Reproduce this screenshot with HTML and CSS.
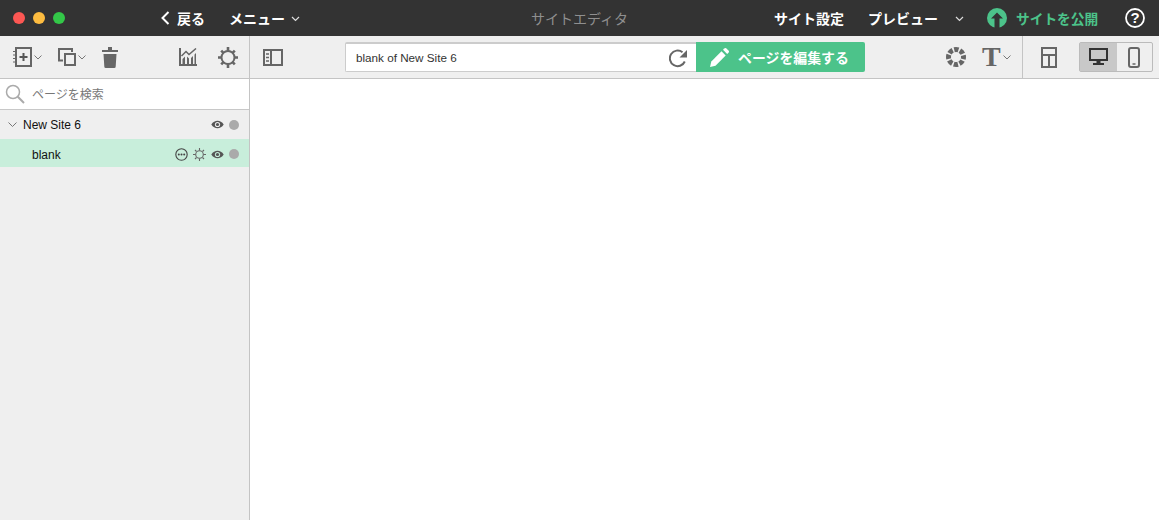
FILE: index.html
```html
<!DOCTYPE html>
<html lang="ja">
<head>
  <meta charset="UTF-8" />
  <title>サイトエディタ</title>
  <link rel="stylesheet" href="styles.css">
</head>
<body>
  <header class="titlebar">
    <div class="lights">
      <span class="light red"></span>
      <span class="light yellow"></span>
      <span class="light green"></span>
    </div>
    <div class="nav-left">
      <span class="nav-item back">
        <svg width="10" height="14" viewBox="0 0 10 14"><path d="M8.5 1 2.5 7l6 6" fill="none" stroke="#fff" stroke-width="2"/></svg>
        戻る
      </span>
      <span class="nav-item menu">メニュー
        <svg class="chev" width="9" height="6" viewBox="0 0 9 6"><path d="M1 1l3.5 3.5L8 1" fill="none" stroke="#ddd" stroke-width="1.2"/></svg>
      </span>
    </div>
    <div class="title">サイトエディタ</div>
    <div class="nav-right">
      <span class="nav-item">サイト設定</span>
      <span class="nav-item preview">プレビュー</span>
      <svg class="preview-chev" width="9" height="6" viewBox="0 0 9 6"><path d="M1 1l3.5 3.5L8 1" fill="none" stroke="#ddd" stroke-width="1.2"/></svg>
      <span class="publish">
        <svg width="20" height="20" viewBox="0 0 20 20"><circle cx="10" cy="10" r="10" fill="#4cc38a"/><path d="M10 4.5 16 10.5H12.5V20H7.5V10.5H4Z" fill="#333"/></svg>
        サイトを公開
      </span>
      <svg class="help" width="20" height="20" viewBox="0 0 20 20"><circle cx="10" cy="10" r="9" fill="none" stroke="#fff" stroke-width="1.8"/><text x="10" y="15" text-anchor="middle" class="help-mark">?</text></svg>
    </div>
  </header>

  <div class="toolbar">
    <div class="tools-side">
      <svg class="ic-add" width="19" height="20" viewBox="0 0 19 20" fill="none" stroke="#666" stroke-width="2">
        <rect x="3" y="1" width="15" height="18"/>
        <path d="M10.5 6v8M6.5 10h8" stroke="#555" stroke-width="2"/>
        <path d="M0 4.5h4M0 8h4M0 11.5h4M0 15h4" stroke-width="1.2"/>
      </svg>
      <svg class="chev-s" width="8" height="5" viewBox="0 0 8 5"><path d="M.5.5 4 4 7.5.5" fill="none" stroke="#777"/></svg>
      <svg class="ic-copy" width="18" height="18" viewBox="0 0 18 18" fill="none" stroke="#666" stroke-width="2">
        <path d="M5 12.5H1V1h13v3"/>
        <rect x="7" y="6" width="10" height="11"/>
      </svg>
      <svg class="chev-s" width="8" height="5" viewBox="0 0 8 5"><path d="M.5.5 4 4 7.5.5" fill="none" stroke="#777"/></svg>
      <svg class="ic-trash" width="16" height="21" viewBox="0 0 16 21" fill="#666">
        <rect x="0" y="3" width="16" height="2"/><rect x="6" y="0" width="4" height="3"/>
        <path d="M1.5 7h13l-.8 12.5a1.5 1.5 0 0 1-1.5 1.5H3.800a1.5 1.5 0 0 1-1.5-1.5Z"/>
      </svg>
      <svg class="ic-chart" width="18" height="18" viewBox="0 0 18 18" fill="#666">
        <path d="M1 0v17h17" fill="none" stroke="#666" stroke-width="2"/>
        <path d="M3.500 16v-5l2.500-2.500V16ZM8 16V8.500l2 2V16ZM12 16v-6l2-2v8ZM15.500 16V6.500L17 5v11Z"/>
        <path d="M2.500 8 7 3.500l3 3L17 .5" fill="none" stroke="#666" stroke-width="1.5"/>
      </svg>
      <svg class="ic-gear" width="20" height="21" viewBox="0 0 20 21" fill="none" stroke="#666">
        <circle cx="10" cy="10.5" r="6.5" stroke-width="2"/>
        <path d="M10 0v4M10 17v4M0 10.5h4M16 10.5h4M3.200 3.700l2.500 2.500M14.300 14.800l2.500 2.500M3.200 17.300l2.500-2.500M14.300 6.200l2.500-2.500" stroke-width="2.6"/>
      </svg>
    </div>
    <div class="tools-main">
      <svg class="ic-panel" width="20" height="17" viewBox="0 0 20 17" fill="none" stroke="#666" stroke-width="2">
        <rect x="1" y="1" width="18" height="15"/>
        <path d="M8 1v15" />
        <path d="M3 5h3M3 8.5h3M3 12h3" stroke-width="1.5"/>
      </svg>
      <div class="url-box">
        <span class="url-text">blank of New Site 6</span>
        <svg width="19" height="20" viewBox="0 0 19 20" fill="none"><path d="M15.800 13.5A7.800 7.800 0 1 1 13.5 4.200" stroke="#666" stroke-width="2"/><path d="M10.5 9.5 18 2v7.500Z" fill="#666"/></svg>
      </div>
      <div class="edit-btn">
        <svg width="19" height="19" viewBox="0 0 19 19" fill="#fff"><path d="M0 19l1.300-5.500L11.500 3.300 15.700 7.500 5.500 17.700Z"/><path d="M13 1.800 14.300.5a1.500 1.500 0 0 1 2.100 0l2.100 2.100a1.500 1.500 0 0 1 0 2.100L17.200 6Z"/></svg>
        ページを編集する
      </div>
      <svg class="ic-aperture" width="20" height="20" viewBox="0 0 20 20" fill="none" stroke="#666" stroke-width="5" stroke-dasharray="4.300 1.600" stroke-dashoffset="2.100">
        <circle cx="10" cy="10" r="7.5"/>
      </svg>
      <span class="ic-type">T</span>
      <svg class="chev-s" width="8" height="5" viewBox="0 0 8 5"><path d="M.5.5 4 4 7.5.5" fill="none" stroke="#777"/></svg>
      <div class="tool-sep"></div>
      <svg class="ic-layout" width="16" height="21" viewBox="0 0 16 21" fill="none" stroke="#666" stroke-width="2">
        <rect x="1" y="1" width="14" height="19"/>
        <path d="M1 8h14M8 8v12"/>
      </svg>
      <div class="device-switch">
        <div class="device active">
          <svg width="19" height="18" viewBox="0 0 19 18" fill="#333"><path d="M1 1h17v11H1Z" fill="none" stroke="#333" stroke-width="2"/><rect x="7.5" y="12" width="4" height="3"/><rect x="4" y="15" width="11" height="2"/></svg>
        </div>
        <div class="device">
          <svg width="12" height="21" viewBox="0 0 12 21" fill="none" stroke="#666" stroke-width="2"><rect x="1" y="1" width="10" height="19" rx="2"/><path d="M4.5 17h3" stroke-width="1.5"/></svg>
        </div>
      </div>
    </div>
  </div>

  <div class="workspace">
    <aside class="sidebar">
      <div class="search">
        <svg width="20" height="20" viewBox="0 0 20 20" fill="none" stroke="#aaa"><circle cx="8" cy="8" r="6.5" stroke-width="1.5"/><path d="M12.800 12.800 19 19" stroke-width="2"/></svg>
        <span class="search-label">ページを検索</span>
      </div>
      <div class="row site-row">
        <svg class="row-chev" width="9" height="6" viewBox="0 0 9 6"><path d="M.5.5 4.5 4.5 8.5.5" fill="none" stroke="#777"/></svg>
        <span class="row-name">New Site 6</span>
        <svg class="eye" width="13" height="9" viewBox="0 0 13 9"><path d="M.3 4.5C3.5-.5 9.5-.5 12.700 4.5 9.5 9.5 3.5 9.5.3 4.5Z" fill="#555"/><circle cx="6.5" cy="4.5" r="2.600" fill="#efefef"/><circle cx="6.5" cy="4.5" r="1.600" fill="#555"/></svg>
        <span class="dot"></span>
      </div>
      <div class="row page-row">
        <span class="row-name">blank</span>
        <svg class="more" width="13" height="13" viewBox="0 0 13 13"><circle cx="6.5" cy="6.5" r="5.700" fill="none" stroke="#444" stroke-width="1.100"/><circle cx="3.800" cy="6.5" r="1" fill="#444"/><circle cx="6.5" cy="6.5" r="1" fill="#444"/><circle cx="9.200" cy="6.5" r="1" fill="#444"/></svg>
        <svg class="gear-s" width="13" height="13" viewBox="0 0 13 13" fill="none" stroke="#666"><circle cx="6.5" cy="6.5" r="3.800" stroke-width="1.100"/><path d="M6.5 0v2.500M6.5 10.500V13M0 6.500h2.500M10.500 6.500H13M2 2l1.500 1.500M9.500 9.500 11 11M2 11l1.500-1.500M9.500 3.500 11 2" stroke-width="1.100"/></svg>
        <svg class="eye" width="13" height="9" viewBox="0 0 13 9"><path d="M.3 4.5C3.5-.5 9.5-.5 12.700 4.5 9.5 9.5 3.5 9.5.3 4.5Z" fill="#555"/><circle cx="6.5" cy="4.5" r="2.600" fill="#c8eedb"/><circle cx="6.5" cy="4.5" r="1.600" fill="#555"/></svg>
        <span class="dot"></span>
      </div>
    </aside>
    <main class="canvas"></main>
  </div>
</body>
</html>
```

FILE: styles.css
```css
* {
  box-sizing: border-box;
}

html, body {
  height: 100%;
}

body {
  margin: 0;
  display: flex;
  flex-direction: column;
  overflow: hidden;
  background: #fff;
  font-family: "Liberation Sans", "Noto Sans CJK JP", sans-serif;
  color: #222;
}

svg {
  display: block;
  flex: none;
}

/* title bar */
.titlebar {
  height: 36px;
  flex: none;
  display: flex;
  align-items: center;
  background: #333;
  color: #fff;
  font-size: 14px;
  font-weight: 700;
  padding-left: 13px;
}

.lights {
  display: flex;
  gap: 8px;
  width: 147px;
}

.light {
  width: 12px;
  height: 12px;
  border-radius: 50%;
}

.red { background: #fc5753; }
.yellow { background: #fdbc40; }
.green { background: #33c748; }

.nav-left {
  display: flex;
  align-items: center;
  width: 371px;
}

.nav-item {
  display: flex;
  align-items: center;
  white-space: nowrap;
}

.back {
  gap: 7px;
  width: 69px;
}

.menu {
  gap: 6px;
}

.chev {
  margin-top: 2px;
}

.title {
  width: 98px;
  color: #8f8f8f;
  font-weight: 400;
  white-space: nowrap;
}

.nav-right {
  display: flex;
  align-items: center;
  margin-left: 145px;
}

.preview {
  margin-left: 24px;
}

.preview-chev {
  margin-left: 17px;
  margin-top: 2px;
}

.publish {
  display: flex;
  align-items: center;
  gap: 9px;
  margin-left: 23px;
  color: #4cc38a;
  font-size: 13.7px;
  white-space: nowrap;
}

.help {
  margin-left: 27px;
}

.help-mark {
  fill: #fff;
  font-size: 15px;
  font-weight: 700;
}

/* toolbar */
.toolbar {
  height: 43px;
  flex: none;
  display: flex;
  background: #efefef;
  border-bottom: 1px solid #c4c4c4;
}

.tools-side {
  width: 250px;
  flex: none;
  display: flex;
  align-items: center;
  padding-left: 13px;
  border-right: 1px solid #c4c4c4;
}

.chev-s {
  margin-left: 2px;
}

.ic-copy { margin-left: 16px; }
.ic-trash { margin-left: 16px; }
.ic-chart { margin-left: 61px; }
.ic-gear { margin-left: 21px; }

.tools-main {
  flex: 1;
  display: flex;
  align-items: center;
  padding-left: 13px;
}

.url-box {
  width: 351px;
  height: 30px;
  margin-left: 62px;
  padding: 0 8px 0 10px;
  display: flex;
  align-items: center;
  justify-content: space-between;
  background: #fff;
  border: 1px solid #ccc;
  border-top: 2px solid #ccc;
  border-right: none;
  border-radius: 2px 0 0 2px;
}

.url-text {
  font-size: 11.7px;
  color: #333;
}

.edit-btn {
  width: 169px;
  height: 30px;
  display: flex;
  align-items: center;
  gap: 9px;
  padding-left: 14px;
  background: #4cc38a;
  border-radius: 0 2px 2px 0;
  color: #fff;
  font-size: 13.9px;
  font-weight: 700;
  white-space: nowrap;
}

.ic-aperture {
  margin-left: 81px;
}

.ic-type {
  margin-left: 16px;
  font-family: "Liberation Serif", serif;
  font-size: 28px;
  font-weight: 700;
  line-height: 28px;
  color: #666;
}

.tool-sep {
  width: 1px;
  height: 42px;
  margin-left: 11px;
  background: #c4c4c4;
}

.ic-layout {
  margin-left: 18px;
}

.device-switch {
  width: 74px;
  height: 30px;
  margin-left: 22px;
  display: flex;
  border: 1px solid #bbb;
  border-radius: 2px;
}

.device {
  flex: 1;
  display: flex;
  align-items: center;
  justify-content: center;
}

.device.active {
  flex: none;
  width: 37px;
  background: #c8c8c8;
}

/* sidebar */
.workspace {
  flex: 1;
  display: flex;
  min-height: 0;
}

.sidebar {
  width: 250px;
  flex: none;
  background: #efefef;
  border-right: 1px solid #c4c4c4;
}

.search {
  height: 31px;
  display: flex;
  align-items: center;
  gap: 7px;
  padding-left: 5px;
  background: #fff;
  border-bottom: 1px solid #c8c8c8;
  font-size: 12px;
  color: #777;
}

.search-label {
  padding-bottom: 2px;
}

.row {
  display: flex;
  align-items: center;
  font-size: 12px;
  color: #111;
}

.site-row {
  height: 29px;
  padding: 0 10px 0 8px;
}

.page-row {
  height: 28px;
  padding: 2px 10px 0 32px;
  background: #c8eedb;
}

.page-row .row-name {
  padding-top: 2px;
}

.row-chev {
  margin-right: 6px;
}

.row-name {
  flex: 1;
}

.more { margin-right: 5px; }
.gear-s { margin-right: 5px; }

.dot {
  width: 10px;
  height: 10px;
  margin-left: 5px;
  border-radius: 50%;
  background: #aaa;
}

.canvas {
  flex: 1;
  background: #fff;
}
```
